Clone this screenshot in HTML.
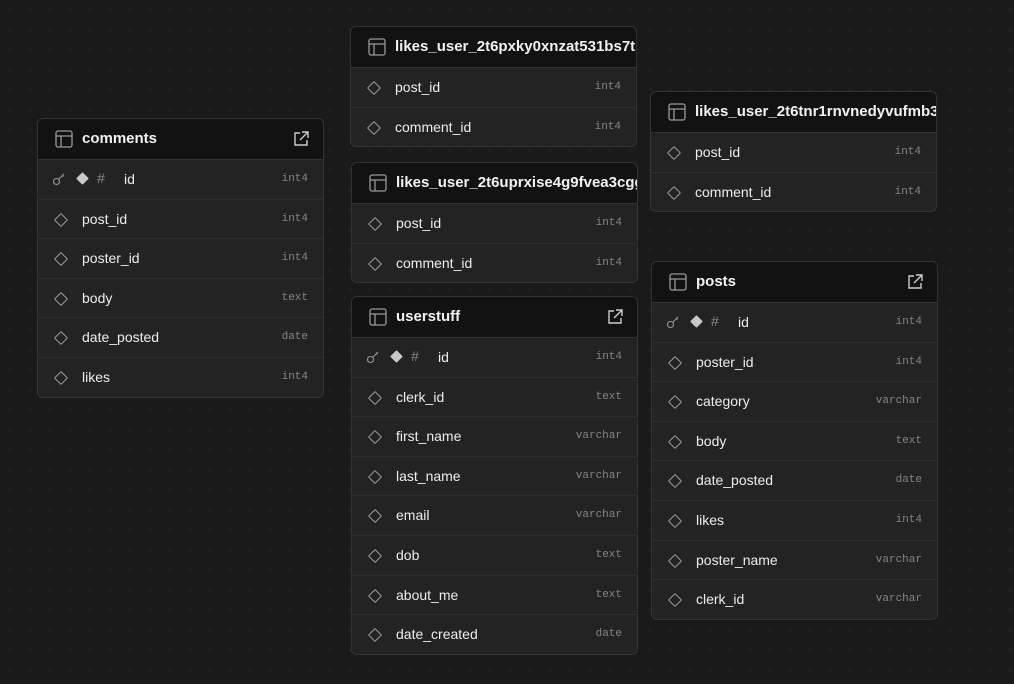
<!DOCTYPE html>
<html><head><meta charset="utf-8"><style>
body{margin:0;width:1014px;height:684px;overflow:hidden;background:#1a1a1a;background-image:radial-gradient(circle,#2a2a2a 0.8px,transparent 1px);background-size:20px 20px;font-family:"Liberation Sans",sans-serif;position:relative}
.t{position:absolute;width:285px;border:1px solid #333;border-radius:6px;overflow:hidden;background:#232323}
.h{height:40px;background:#121212;border-bottom:1px solid #333;position:relative;color:#f2f2f2;font-size:15px;font-weight:bold;white-space:nowrap}
.h span{position:absolute;left:44px;top:11px}
.h svg.tb{position:absolute;left:17px;top:11px}
.h svg.ex{position:absolute;right:14px;top:12px}
.r{height:38.6px;border-bottom:1px solid #2e2e2e;position:relative;color:#ededed;font-size:14px}
.r:last-child{border-bottom:none}
.r .n{position:absolute;left:44px;top:11px}
.r .ty{position:absolute;right:15px;top:13px;font-family:"Liberation Mono",monospace;font-size:11px;color:#858585}
.r .d{position:absolute;left:18px;top:15px;width:8px;height:8px;border:1.3px solid #9a9a9a;transform:rotate(45deg);border-radius:1px}
.pk .k{position:absolute;left:14px;top:12px}
.pk .fd{position:absolute;left:40px;top:14px;width:9px;height:9px;background:#c8c8c8;transform:rotate(45deg);border-radius:1px}
.pk .hs{position:absolute;left:59px;top:10px;color:#888;font-size:14px}
.pk .n{left:86px}
</style></head><body>

<svg width="0" height="0" style="position:absolute"><defs>
<symbol id="tb" viewBox="0 0 18 18"><rect x="1" y="1" width="16" height="16" rx="2" fill="none" stroke="#999" stroke-width="1.3"/><path d="M1 6h16M6 6v11" stroke="#999" stroke-width="1.3"/></symbol>
<symbol id="ex" viewBox="0 0 16 16"><path d="M7 2H2v12h12V9M9 1h6v6M15 1L7 9" fill="none" stroke="#ccc" stroke-width="1.4"/></symbol>
<symbol id="key" viewBox="0 0 14 14"><circle cx="4.5" cy="9.5" r="3" fill="none" stroke="#999" stroke-width="1.1"/><path d="M6.5 7.5L12 2M10 3l1.5 1.5" stroke="#999" stroke-width="1.1"/></symbol>
</defs></svg>

<div class="t" style="left:37px;top:118px">
<div class="h"><svg class="tb" width="18" height="18"><use href="#tb"/></svg><span>comments</span><svg class="ex" width="16" height="16"><use href="#ex"/></svg></div>
<div class="r pk"><svg class="k" width="14" height="14"><use href="#key"/></svg><i class="fd"></i><span class="hs">#</span><span class="n">id</span><span class="ty">int4</span></div>
<div class="r"><i class="d"></i><span class="n">post_id</span><span class="ty">int4</span></div>
<div class="r"><i class="d"></i><span class="n">poster_id</span><span class="ty">int4</span></div>
<div class="r"><i class="d"></i><span class="n">body</span><span class="ty">text</span></div>
<div class="r"><i class="d"></i><span class="n">date_posted</span><span class="ty">date</span></div>
<div class="r"><i class="d"></i><span class="n">likes</span><span class="ty">int4</span></div>
</div>

<div class="t" style="left:350px;top:26px">
<div class="h"><svg class="tb" width="18" height="18"><use href="#tb"/></svg><span>likes_user_2t6pxky0xnzat531bs7tl3</span></div>
<div class="r"><i class="d"></i><span class="n">post_id</span><span class="ty">int4</span></div>
<div class="r"><i class="d"></i><span class="n">comment_id</span><span class="ty">int4</span></div>
</div>

<div class="t" style="left:351px;top:162px">
<div class="h"><svg class="tb" width="18" height="18"><use href="#tb"/></svg><span>likes_user_2t6uprxise4g9fvea3cgg</span></div>
<div class="r"><i class="d"></i><span class="n">post_id</span><span class="ty">int4</span></div>
<div class="r"><i class="d"></i><span class="n">comment_id</span><span class="ty">int4</span></div>
</div>

<div class="t" style="left:351px;top:296px">
<div class="h"><svg class="tb" width="18" height="18"><use href="#tb"/></svg><span>userstuff</span><svg class="ex" width="16" height="16"><use href="#ex"/></svg></div>
<div class="r pk"><svg class="k" width="14" height="14"><use href="#key"/></svg><i class="fd"></i><span class="hs">#</span><span class="n">id</span><span class="ty">int4</span></div>
<div class="r"><i class="d"></i><span class="n">clerk_id</span><span class="ty">text</span></div>
<div class="r"><i class="d"></i><span class="n">first_name</span><span class="ty">varchar</span></div>
<div class="r"><i class="d"></i><span class="n">last_name</span><span class="ty">varchar</span></div>
<div class="r"><i class="d"></i><span class="n">email</span><span class="ty">varchar</span></div>
<div class="r"><i class="d"></i><span class="n">dob</span><span class="ty">text</span></div>
<div class="r"><i class="d"></i><span class="n">about_me</span><span class="ty">text</span></div>
<div class="r"><i class="d"></i><span class="n">date_created</span><span class="ty">date</span></div>
</div>

<div class="t" style="left:650px;top:91px">
<div class="h"><svg class="tb" width="18" height="18"><use href="#tb"/></svg><span>likes_user_2t6tnr1rnvnedyvufmb3b</span></div>
<div class="r"><i class="d"></i><span class="n">post_id</span><span class="ty">int4</span></div>
<div class="r"><i class="d"></i><span class="n">comment_id</span><span class="ty">int4</span></div>
</div>

<div class="t" style="left:651px;top:261px">
<div class="h"><svg class="tb" width="18" height="18"><use href="#tb"/></svg><span>posts</span><svg class="ex" width="16" height="16"><use href="#ex"/></svg></div>
<div class="r pk"><svg class="k" width="14" height="14"><use href="#key"/></svg><i class="fd"></i><span class="hs">#</span><span class="n">id</span><span class="ty">int4</span></div>
<div class="r"><i class="d"></i><span class="n">poster_id</span><span class="ty">int4</span></div>
<div class="r"><i class="d"></i><span class="n">category</span><span class="ty">varchar</span></div>
<div class="r"><i class="d"></i><span class="n">body</span><span class="ty">text</span></div>
<div class="r"><i class="d"></i><span class="n">date_posted</span><span class="ty">date</span></div>
<div class="r"><i class="d"></i><span class="n">likes</span><span class="ty">int4</span></div>
<div class="r"><i class="d"></i><span class="n">poster_name</span><span class="ty">varchar</span></div>
<div class="r"><i class="d"></i><span class="n">clerk_id</span><span class="ty">varchar</span></div>
</div>

</body></html>
